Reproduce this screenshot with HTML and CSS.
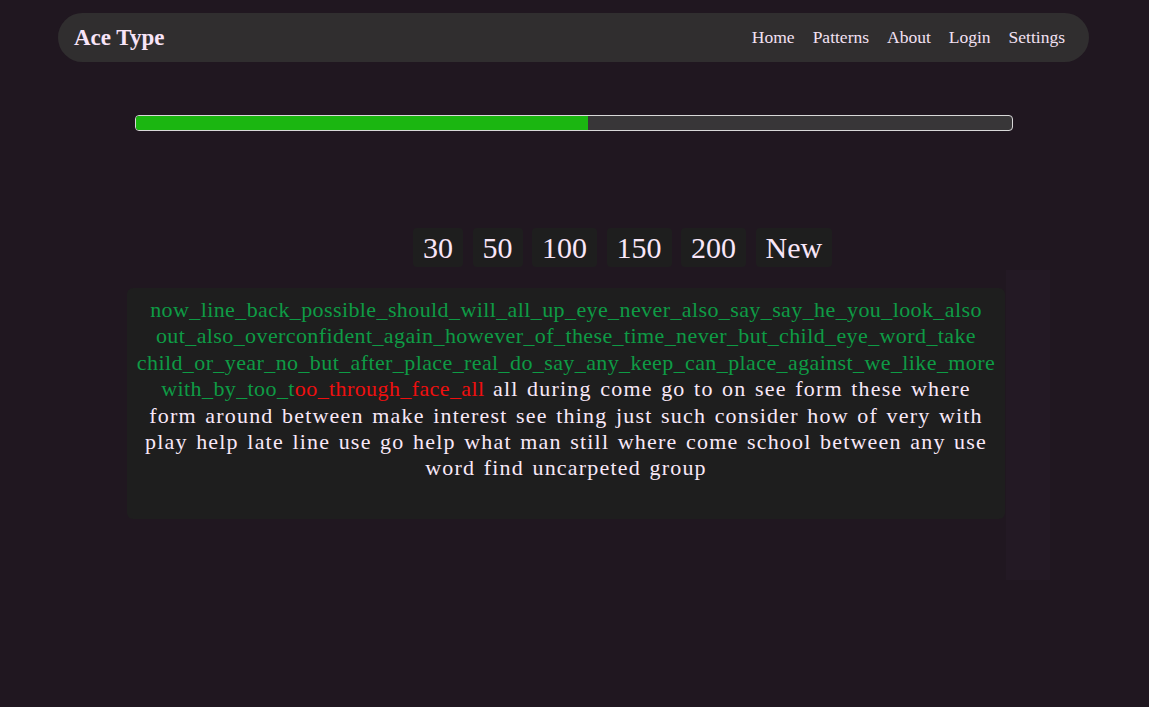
FILE: index.html
```html
<!DOCTYPE html>
<html>
<head>
<meta charset="utf-8">
<link rel="stylesheet" href="styles.css">
</head>
<body>
<nav class="nav">
  <div class="logo">Ace Type</div>
  <div class="links">
    <a>Home</a><a>Patterns</a><a>About</a><a>Login</a><a>Settings</a>
  </div>
</nav>
<div class="progress"><div class="fill" style="width:51.6%"></div></div>
<div class="counts">
  <span class="btn">30</span><span class="btn">50</span><span class="btn">100</span><span class="btn">150</span><span class="btn">200</span><span class="btn">New</span>
</div>
<div class="stage">
  <div class="text"><span class="ok">now_line_back_possible_should_will_all_up_eye_never_also_say_say_he_you_look_also out_also_overconfident_again_however_of_these_time_never_but_child_eye_word_take child_or_year_no_but_after_place_real_do_say_any_keep_can_place_against_we_like_more with_by_too_t</span><span class="bad">oo_through_face_all</span> all during come go to on see form these where form around between make interest see thing just such consider how of very with play help late line use go help what man still where come school between any use word find uncarpeted group</div>
  <div class="ghost"></div>
</div>
</body>
</html>
```
FILE: styles.css
```css
html, body { margin: 0; padding: 0; }
body {
  background: #201720;
  font-family: "Liberation Serif", "Times New Roman", serif;
  color: #f6e6f6;
  width: 1149px;
  height: 707px;
  overflow: hidden;
  padding-top: 13px;
  box-sizing: border-box;
}
.nav {
  margin: 0 60px 0 58px;
  height: 49px;
  background: #302e2f;
  border-radius: 25px;
  display: flex;
  align-items: center;
  justify-content: space-between;
  padding: 0 24px 0 16px;
}
.logo { font-size: 23px; font-weight: bold; color: #f8e4f8; }
.links { display: flex; gap: 18px; font-size: 17.5px; }
.links a { color: #f3e1f3; }
.progress {
  margin: 53px 0 0 135px;
  width: 878px;
  height: 16px;
  box-sizing: border-box;
  border: 1px solid #d8d8d8;
  border-radius: 4px;
  background: #383638;
  overflow: hidden;
}
.fill { height: 100%; background: #1bb611; }
.counts {
  margin: 97px 0 0 413px;
  display: flex;
  gap: 9.5px;
  height: 39px;
}
.btn {
  background: #1e1e1e;
  border-radius: 4px;
  font-size: 30px;
  line-height: 39px;
  padding: 0 10px;
  color: #f8e6f8;
}
.stage { display: flex; margin: 21px 0 0 127px; align-items: flex-start; }
.text {
  width: 878px;
  height: 231px;
  box-sizing: border-box;
  background: #1e1e1e;
  border-radius: 6px;
  padding: 9px 9px;
  text-align: center;
  font-size: 22px;
  line-height: 26.4px;
  letter-spacing: 1.2px;
  word-spacing: 1.8px;
  color: #f8e8f8;
}
.ok, .bad { letter-spacing: 0.4px; word-spacing: 5.2px; }
.ok { color: #0e9b45; }
.bad { color: #ef0f0f; }
.ghost {
  width: 44px;
  height: 310px;
  margin: -18px 0 0 1px;
  background: #231924;
}
```
